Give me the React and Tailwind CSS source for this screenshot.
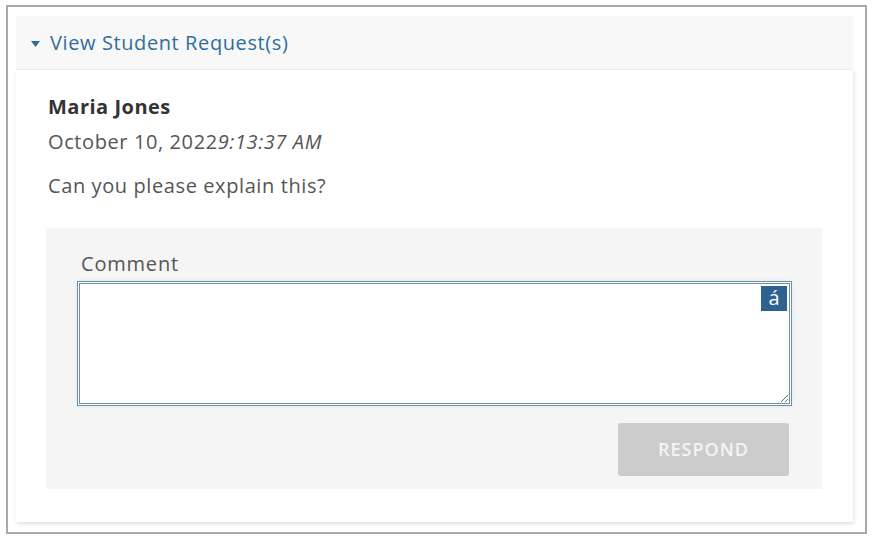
import React from "react";

export default function App() {
  return (
    <div
      className="w-[872px] h-[538px] bg-white pt-[5px] pl-[6px]"
      style={{ fontFamily: '"Open Sans", "Noto Sans", sans-serif' }}
    >
      <div className="w-[861px] h-[529px] border-2 border-[#a9a9a9] pt-[9px] pl-[8px]">
        <div className="w-[837px]">
          <div className="h-[54px] bg-[#f8f8f8] flex items-center pl-[15px] gap-[10px] text-[#2f6e9c] text-[20px] tracking-[0.6px] leading-[28px] border-b border-[#efefef]">
            <svg width="9" height="6" viewBox="0 0 9 6" className="mt-[3px]">
              <path d="M0 0 L9 0 L4.5 6 Z" fill="#2f6e9c" />
            </svg>
            <span>View Student Request(s)</span>
          </div>
          <div className="bg-white shadow-[1px_2px_4px_rgba(0,0,0,0.13)] pt-[23px] pl-[30px] pb-[33px]">
            <div className="ml-[2px] text-[20px] font-bold tracking-[0.5px] text-[#333] leading-[28px]">
              Maria Jones
            </div>
            <div className="ml-[2px] mt-[7px] text-[20px] tracking-[0.6px] text-[#555] leading-[28px]">
              October 10, 2022<span className="italic">9:13:37 AM</span>
            </div>
            <div className="ml-[2px] mt-[16px] text-[20px] tracking-[0.6px] text-[#555] leading-[28px]">
              Can you please explain this?
            </div>
            <div className="mt-[28px] w-[776px] bg-[#f5f5f5] pt-[22px] pl-[31px] pb-[13px]">
              <div className="ml-[4px] text-[20px] tracking-[0.8px] text-[#555] leading-[28px]">Comment</div>
              <div className="relative mt-[3px] w-[715px] h-[125px]">
                <textarea className="block w-full h-full bg-white border-[3px] border-double border-[#6f8e9f] shadow-[0_0_3px_#cfe8f2] outline-none resize" />
                <div className="absolute top-[5px] right-[5px] w-[26px] h-[25px] bg-[#2d6190] text-white text-[20px] leading-[24px] text-center">
                  á
                </div>
              </div>
              <div className="mt-[17px] w-[715px] flex justify-end pr-[3px]">
                <button className="w-[171px] h-[53px] rounded-[3px] bg-[#cccccc] text-[#f4f4f4] text-[18px] font-semibold tracking-[1px]">
                  RESPOND
                </button>
              </div>
            </div>
          </div>
        </div>
      </div>
    </div>
  );
}
